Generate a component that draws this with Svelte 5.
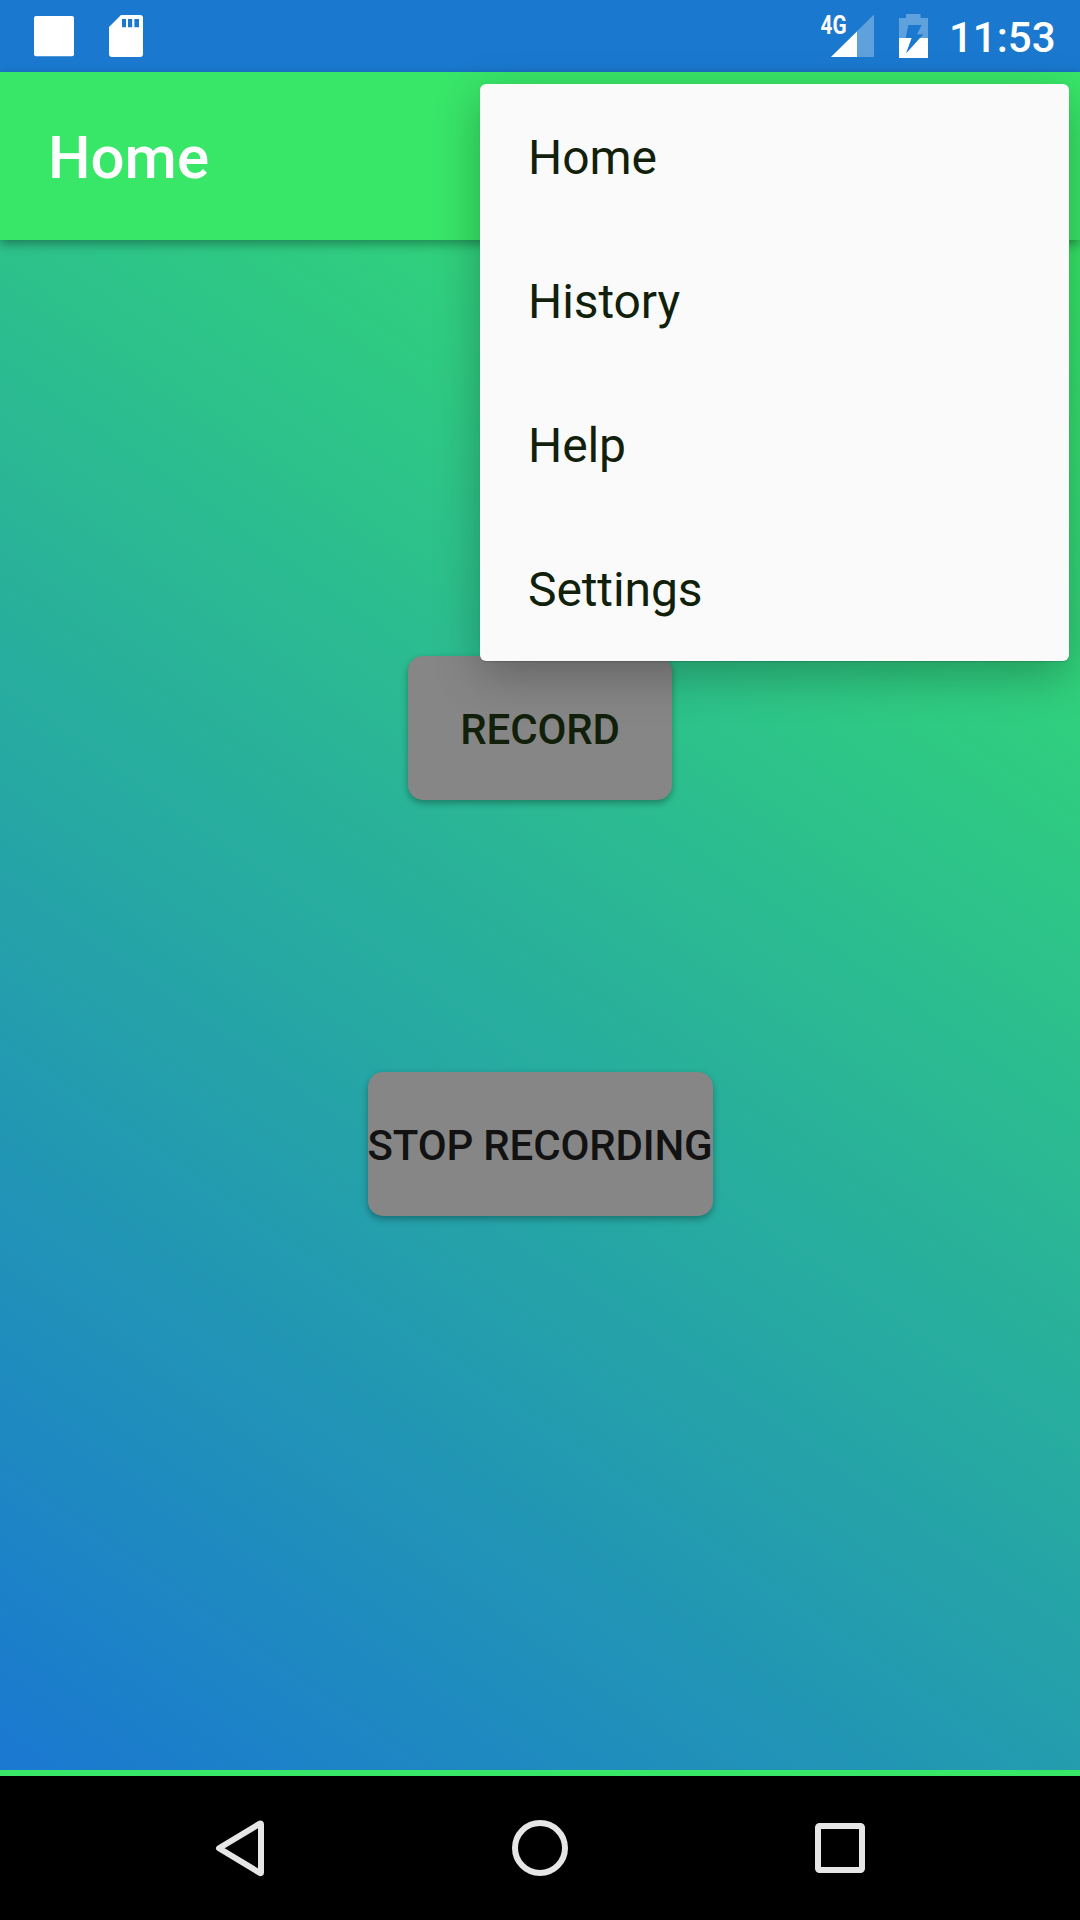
<script>
  const menu = ['Home', 'History', 'Help', 'Settings'];
</script>

<div class="screen">
  <header class="status">
    <svg class="notify" width="150" height="72" viewBox="0 0 150 72" fill="#fff">
      <rect x="34" y="16" width="40" height="40.3" rx="2" />
      <path fill-rule="evenodd" d="M121 15H140Q143 15 143 18V54Q143 57 140 57H112Q109 57 109 54V27ZM122 19V27.300H126V19ZM128 19V27.300H132.200V19ZM134.400 19V27.300H139V19Z" />
    </svg>
    <div class="right">
      <svg width="110" height="72" viewBox="820 0 110 72" fill="#fff">
        <text class="net" x="820.5" y="33.5" textLength="26" lengthAdjust="spacingAndGlyphs">4G</text>
        <path d="M874 14.500V57H831Z" opacity=".3" />
        <path d="M857 31.500V57H831Z" />
        <path opacity=".3" d="M906 14H920.500V18H928V38H920L923.300 34.300H917L921.700 25H908.300L905.700 38H899V18H906Z" />
        <path d="M899 38H911.600L906 53.500L920 38H928V58H899Z" />
      </svg>
      <span class="clock">11:53</span>
    </div>
  </header>

  <div class="appbar"><h1>Home</h1></div>

  <main>
    <button class="record">RECORD</button>
    <button class="stop">STOP RECORDING</button>
  </main>
  <div class="line"></div>

  <nav class="keys">
    <svg width="1080" height="144" viewBox="0 0 1080 144" fill="none" stroke="#e6e6e6" stroke-width="6" stroke-linejoin="round">
      <path d="M219 72.300L260 47.500Q261 47.500 261 48.500V96.500Q261 97.500 260 97Z" />
      <circle cx="540" cy="72" r="25" />
      <rect x="818" y="50" width="44" height="44" rx="1.500" />
    </svg>
  </nav>

  <ul class="menu">
    {#each menu as item}
      <li>{item}</li>
    {/each}
  </ul>
</div>

<style>
  :global(body) {
    margin: 0;
  }
  .screen {
    position: relative;
    width: 1080px;
    height: 1920px;
    overflow: hidden;
    display: flex;
    flex-direction: column;
    font-family: Roboto, sans-serif;
  }
  .status {
    height: 72px;
    flex: none;
    background: #1a79cf;
    display: flex;
    justify-content: space-between;
  }
  .right {
    display: flex;
    width: 260px;
  }
  .right svg {
    flex: none;
  }
  .net {
    font-size: 25.5px;
    font-weight: 700;
  }
  .clock {
    color: #fff;
    font-size: 42px;
    font-weight: 500;
    line-height: 76px;
    margin-left: 19px;
  }
  .appbar {
    height: 168px;
    box-sizing: border-box;
    flex: none;
    background: #38e668;
    box-shadow: 0 4px 10px rgba(0, 0, 0, 0.35);
    display: flex;
    align-items: center;
    padding: 4px 0 0 48px;
    z-index: 1;
  }
  h1 {
    margin: 0;
    color: #fff;
    font-size: 60px;
    font-weight: 500;
    line-height: 70px;
  }
  main {
    height: 1530px;
    flex: none;
    box-sizing: border-box;
    padding-top: 416px;
    background: linear-gradient(35.22deg, #1a78d1, #36e668);
    display: flex;
    flex-direction: column;
    align-items: center;
    gap: 272px;
  }
  button {
    height: 144px;
    border: 0;
    border-radius: 15px;
    padding: 2px 0 0;
    background: #868686;
    font: 500 42px/49px Roboto, sans-serif;
    letter-spacing: -0.17px;
    white-space: nowrap;
    box-shadow: 0 3px 7px rgba(0, 0, 0, 0.32);
  }
  .record {
    width: 264px;
    color: #111f0b;
  }
  .stop {
    width: 345px;
    color: #121212;
  }
  .line {
    height: 6px;
    flex: none;
    background: #38e668;
  }
  .keys {
    height: 144px;
    flex: none;
    background: #000;
  }
  .keys svg {
    display: block;
  }
  .menu {
    position: absolute;
    left: 480px;
    top: 84px;
    width: 588.5px;
    height: 576.5px;
    margin: 0;
    padding: 0;
    list-style: none;
    background: #fafafa;
    border-radius: 6px;
    box-shadow: 0 14px 46px rgba(0, 0, 0, 0.27), 0 1px 1px rgba(0, 0, 0, 0.15);
    z-index: 2;
  }
  li {
    height: 144px;
    line-height: 148px;
    padding-left: 48px;
    font-size: 48px;
    letter-spacing: -0.1px;
    color: #111f0b;
  }
</style>
